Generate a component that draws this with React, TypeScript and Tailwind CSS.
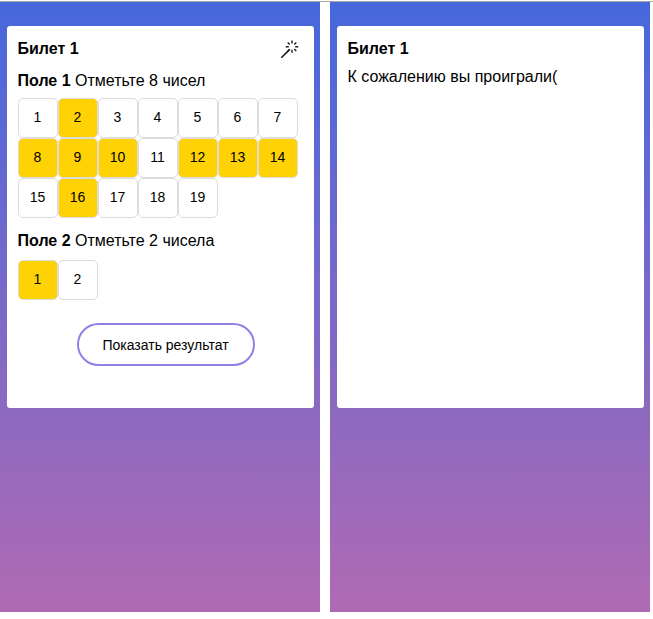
import { useState } from 'react';

function WandIcon() {
  return (
    <svg width="20" height="20" viewBox="0 0 20 20" fill="none" stroke="#1a1a1a" strokeWidth="1.4">
      <path d="M1.3 18.8 9.8 10.4" strokeWidth="1.6" />
      <path d="M12 1.6v3M12 10.8v3M5.8 7.7h3M15.2 7.7h3M7.7 3.4l2 2M14.3 5.4l2-2M14.3 10l2 2M9.3 10.4l-1.6 1.6" />
    </svg>
  );
}

function Field({
  title,
  hint,
  count,
  initial,
  className,
}: {
  title: string;
  hint: string;
  count: number;
  initial: number[];
  className: string;
}) {
  const [selected, setSelected] = useState(initial);
  const toggle = (n: number) =>
    setSelected((s) => (s.includes(n) ? s.filter((v) => v !== n) : [...s, n]));

  return (
    <section className={`flex flex-col ${className}`}>
      <p className="-ml-[0.5px] h-6 leading-6">
        <b>{title}</b> {hint}
      </p>
      <div className="grid w-[280px] grid-cols-7">
        {Array.from({ length: count }, (_, i) => i + 1).map((n) => (
          <button
            key={n}
            onClick={() => toggle(n)}
            className={`size-10 rounded-[5px] border border-[#dcdcdc] pr-px pb-0.5 text-sm ${
              selected.includes(n) ? 'bg-[#ffd205]' : 'bg-white'
            }`}
          >
            {n}
          </button>
        ))}
      </div>
    </section>
  );
}

function Screen({ children }: { children: React.ReactNode }) {
  return (
    <div className="h-[610px] w-80 bg-linear-to-b/srgb from-[#4568dc] to-[#b06ab3] pt-6 pl-[7px]">
      <div className="flex h-[382px] w-[307px] flex-col rounded-[3px] bg-white px-[11px] pt-[11px]">
        {children}
      </div>
    </div>
  );
}

export default function App() {
  return (
    <div className="h-[619px] w-[653px] overflow-hidden bg-white pt-px font-['Liberation_Sans',Arial,sans-serif] text-base text-black">
      <div className="flex gap-2.5 border-t border-[#a9a9a9]">
        <Screen>
          <header className="flex h-6 items-center justify-between pr-[3px]">
            <h1 className="-ml-[0.5px] font-bold">Билет 1</h1>
            <WandIcon />
          </header>
          <Field
            title="Поле 1"
            hint="Отметьте 8 чисел"
            count={19}
            initial={[2, 8, 9, 10, 12, 13, 14, 16]}
            className="mt-2 gap-[5px]"
          />
          <Field
            title="Поле 2"
            hint="Отметьте 2 чисела"
            count={2}
            initial={[1]}
            className="mt-[11px] gap-[7px]"
          />
          <button className="mt-[23px] ml-[59px] h-[43px] w-[178px] rounded-full border-2 border-[#9280e6] pr-px text-sm">
            Показать результат
          </button>
        </Screen>
        <Screen>
          <h1 className="-ml-[0.5px] h-6 leading-6 font-bold">Билет 1</h1>
          <p className="mt-1 -ml-[0.5px] leading-6">К сожалению вы проиграли(</p>
        </Screen>
      </div>
    </div>
  );
}
